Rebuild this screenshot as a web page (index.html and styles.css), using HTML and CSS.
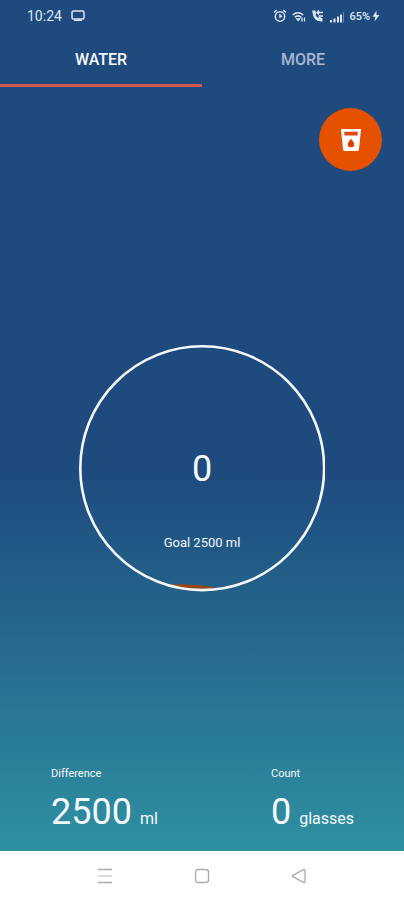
FILE: index.html
```html
<!DOCTYPE html>
<html lang="en">
<head>
<meta charset="utf-8">
<meta name="viewport" content="width=device-width, initial-scale=1">
<title>Water</title>
<link rel="stylesheet" href="styles.css">
</head>
<body>
<div class="app">
  <header class="status">
    <div class="status-group">
      <time class="clock">10:24</time>
      <svg class="cast" width="14" height="12" viewBox="0 0 14 12" aria-hidden="true"><rect x="1" y="1" width="12" height="8" rx="1.5" fill="none" stroke="currentColor" stroke-width="1.5"/><path d="M3 9.5h8v1.5H3z" fill="currentColor"/></svg>
    </div>
    <div class="status-group status-icons">
      <svg width="14" height="14" viewBox="0 0 14 14" fill="none" stroke="currentColor" stroke-width="1.5" aria-hidden="true"><circle cx="7" cy="7.5" r="4.7"/><path d="M1 3.5L3.8 1.2M13 3.5L10.2 1.2M7 5v3l2-1"/></svg>
      <svg width="14" height="14" viewBox="0 0 14 14" fill="none" stroke="currentColor" stroke-width="1.6" aria-hidden="true"><path d="M.8 6q5-4.500 10.500 0M2.800 8.300q3.200-2.800 6.500 0"/><path d="M5 10L6.200 11.500 7.500 10zM10 8.500v4M12.500 12.500V8.500" stroke-width="1.3"/></svg>
      <svg width="14" height="14" viewBox="0 0 14 14" fill="none" stroke="currentColor" stroke-width="1.4" aria-hidden="true"><path d="M2 2.300h1.800l.8 2.500-1 1q1.200 2.700 3.700 4l1.200-1.200 2.300 1v2.200Q3 12.500 2 2.300z" fill="currentColor"/><path d="M6 3.500h6M8 1.500l-2 2 2 2M12 7H7.500"/></svg>
      <svg width="14" height="14" viewBox="0 0 14 14" fill="currentColor" aria-hidden="true"><path d="M0 11h2v2.500H0zM3.500 9.500h2v4h-2zM7 7.500h2v6H7zM10 5.500h2v8h-2z"/><path d="M13 3h1v10.500h-1z" opacity=".4"/></svg>
      <span class="battery">65%</span>
      <svg width="8" height="12" viewBox="0 0 8 12" fill="currentColor" aria-hidden="true"><path d="M4.500.8L.5 6.800h2.800L2.500 11.500 7.500 5H4.500z"/></svg>
    </div>
  </header>
  <nav class="tabs">
    <a class="tab active" href="#water" aria-current="page">WATER</a>
    <a class="tab" href="#more">MORE</a>
  </nav>
  <main class="content" id="water">
    <button class="add" type="button" aria-label="Add water">
      <svg width="22" height="24" viewBox="0 0 24 26" aria-hidden="true"><path d="M1 1h22l-2.300 22q-.2 2-2 2H5.300q-1.800 0-2-2z" fill="#fff"/><path d="M4.500 4h15l-.4 4H4.900z" fill="#e04818"/><path d="M12 11.500q3.500 4 3.500 6a3.500 3.500 0 0 1-7 0q0-2 3.500-6z" fill="#dc4000"/></svg>
    </button>
    <section class="progress">
      <div class="dial">
        <svg class="ring" viewBox="0 0 246 246" aria-hidden="true"><path d="M88 239Q118 238 140 243Q112 249 88 239z" fill="#964719"/><circle cx="123" cy="123" r="121.700" fill="none" stroke="#f4f8fc" stroke-width="2.600"/></svg>
        <span class="amount">0</span>
        <span class="goal">Goal 2500 ml</span>
      </div>
    </section>
    <section class="stats">
      <div class="stat">
        <span class="label">Difference</span>
        <div class="reading"><span class="value">2500</span><span class="unit">ml</span></div>
      </div>
      <div class="stat">
        <span class="label">Count</span>
        <div class="reading"><span class="value">0</span><span class="unit">glasses</span></div>
      </div>
    </section>
  </main>
  <footer class="system">
    <button type="button" aria-label="Recent apps"><svg width="16" height="16" viewBox="0 0 16 16" fill="none" stroke="currentColor" stroke-width="1.300"><path d="M1 1.500h14M1 14.500h14"/><path d="M1 8h14" opacity=".65"/></svg></button>
    <button type="button" aria-label="Home"><svg width="16" height="16" viewBox="0 0 16 16" fill="none" stroke="currentColor" stroke-width="1.300"><rect x="1.500" y="1.500" width="13" height="13" rx="2.500"/></svg></button>
    <button type="button" aria-label="Back"><svg width="16" height="16" viewBox="0 0 16 16" fill="none" stroke="currentColor" stroke-width="1.300" stroke-linejoin="round"><path d="M1.800 7.300L12.500 1.700q1.500-.5 1.500 1v10.600q0 1.500-1.500 1L1.800 8.700q-.8-.7 0-1.400z"/></svg></button>
  </footer>
</div>
</body>
</html>
```
FILE: styles.css
```css
* { box-sizing: border-box; }
body {
  margin: 0;
  font-family: Roboto, "Liberation Sans", sans-serif;
  color: #f4f8fc;
}
button {
  border: 0;
  padding: 0;
  background: none;
  color: inherit;
}
svg { display: block; }
.app {
  display: flex;
  flex-direction: column;
  min-height: 100vh;
  background: linear-gradient(#1e4a7e 0, #1e4a7e 52%, #2f91a1 95%);
}
.status {
  display: flex;
  justify-content: space-between;
  align-items: center;
  height: 32px;
  padding: 0 24px 0 27px;
  color: #dce6f4;
}
.status-group {
  display: flex;
  align-items: center;
  gap: 9px;
}
.status-icons { gap: 5px; }
.clock { font-size: 14px; }
.battery {
  font-size: 11px;
  font-weight: 500;
}
.battery + svg { margin-left: -3px; }
.tabs {
  display: flex;
  height: 55px;
}
.tab {
  flex: 1;
  display: flex;
  align-items: center;
  justify-content: center;
  padding-top: 3px;
  border-bottom: 3px solid transparent;
  color: #a5b7d2;
  font-size: 16px;
  font-weight: 500;
  text-decoration: none;
}
.tab.active {
  border-color: #d35a50;
  color: #f4f8fc;
}
.content {
  flex: 1;
  display: flex;
  flex-direction: column;
  padding: 21px 0 17px;
}
.add {
  display: flex;
  align-items: center;
  justify-content: center;
  align-self: flex-end;
  width: 63px;
  height: 63px;
  margin-right: 22px;
  border-radius: 50%;
  background: #e65100;
}
.progress {
  flex: 1;
  display: flex;
  align-items: center;
  justify-content: center;
}
.dial {
  display: grid;
  grid-template-rows: 1fr auto 1fr;
  justify-items: center;
  position: relative;
  width: 61%;
  aspect-ratio: 1;
}
.ring {
  position: absolute;
  inset: 0;
  width: 100%;
  height: 100%;
}
.amount {
  grid-row: 2;
  font-size: 36px;
  line-height: 44px;
}
.goal {
  grid-row: 3;
  padding-top: 44px;
  font-size: 13px;
  line-height: 16px;
}
.stats {
  display: grid;
  grid-template-columns: 220fr 133fr;
  padding-left: 51px;
}
.stat {
  display: flex;
  flex-direction: column;
  gap: 8px;
}
.label {
  font-size: 11px;
  line-height: 16px;
}
.reading {
  display: flex;
  align-items: baseline;
  gap: 8px;
}
.value {
  font-size: 36px;
  line-height: 44px;
}
.unit { font-size: 16px; }
.system {
  display: flex;
  justify-content: center;
  align-items: center;
  gap: 20%;
  height: 49px;
  background: #fff;
  color: #aaa;
}
```
